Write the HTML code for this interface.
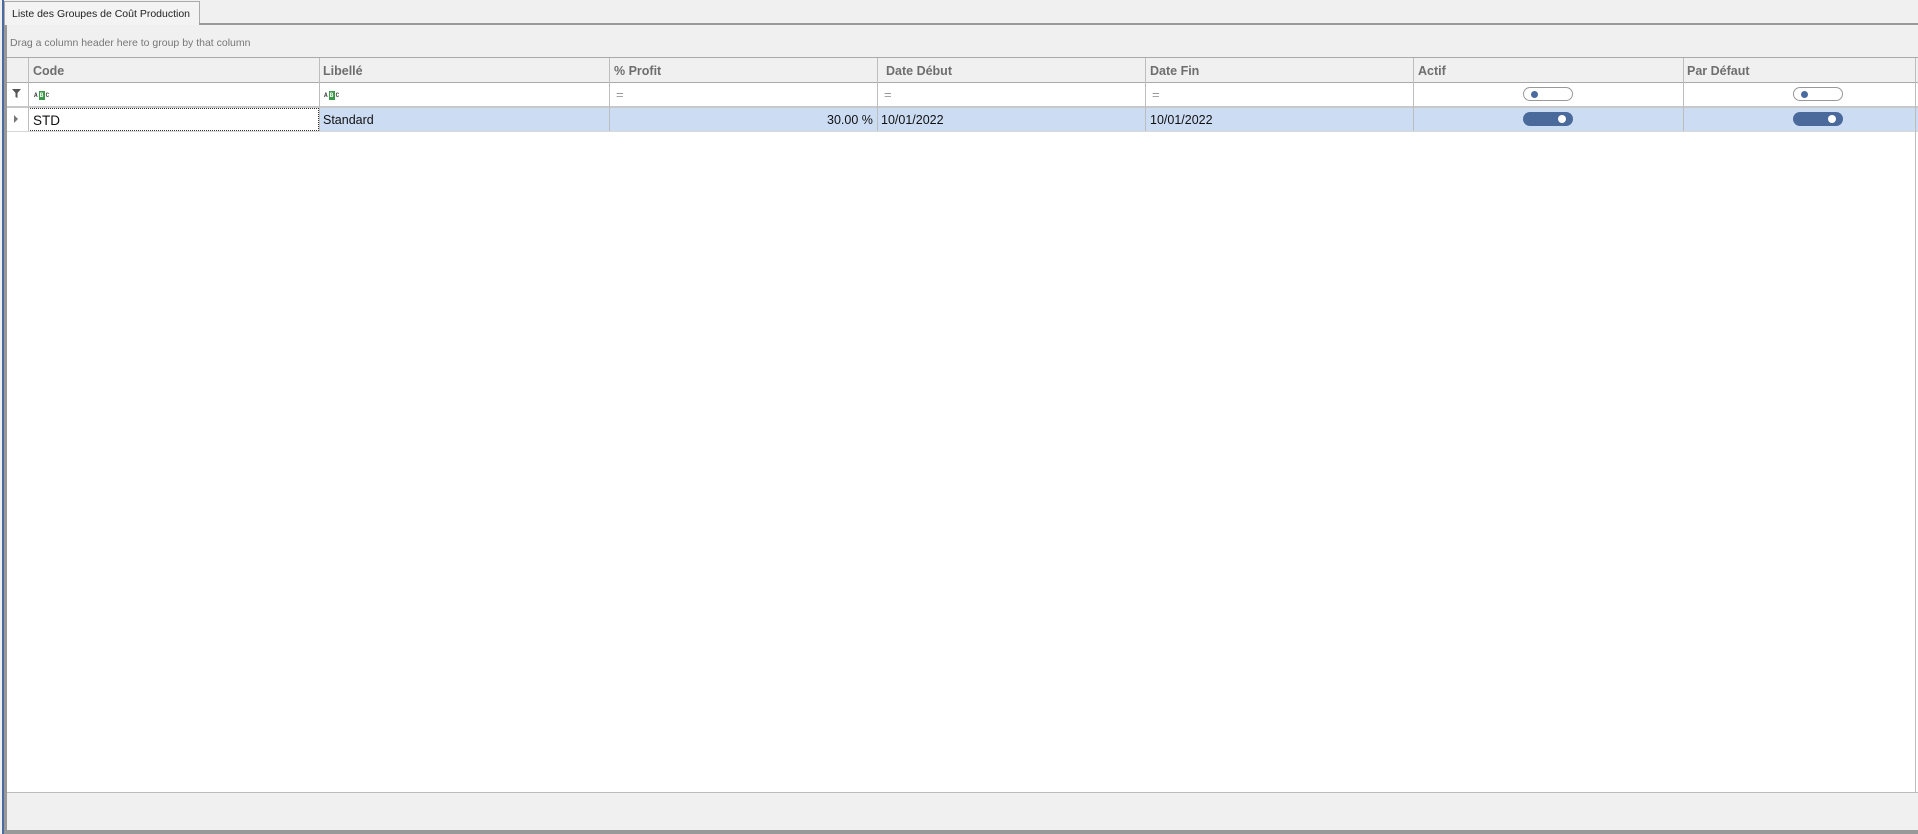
<!DOCTYPE html>
<html><head><meta charset="utf-8"><style>
*{margin:0;padding:0;box-sizing:border-box}
body{width:1918px;height:834px;background:#f0f0f0;font-family:"Liberation Sans",sans-serif;position:relative;overflow:hidden}
.a{position:absolute}
.hd{color:#6e6e6e;font-weight:600;font-size:12.5px;top:64px}
.cell{font-size:12.5px;color:#111;top:113px}
.vl{position:absolute;width:1px;background:#bdbdbd}
.tg{position:absolute;width:50px;height:14px;border-radius:7px}
.off{background:#fff;border:1px solid #999}
.off::after{content:"";position:absolute;left:7px;top:3px;width:7px;height:7px;border-radius:50%;background:#4a6aa0}
.on{background:#4a6a9c}
.on::after{content:"";position:absolute;right:7px;top:3px;width:8px;height:8px;border-radius:50%;background:#fff}
.abc{position:absolute;top:91px;height:9px;display:flex;align-items:center;gap:1px;font-size:6px;font-family:"Liberation Mono",monospace;color:#444;font-weight:bold;line-height:9px}
.abc i{font-style:normal;display:inline-block;width:6px;height:9px;background:#3a9a4a;color:#fff;text-align:center}
.eq{position:absolute;top:87px;color:#999;font-size:13px}
</style></head><body>
<div class="a" style="left:2px;top:0;width:2px;height:834px;background:#4a6aa0"></div>
<div class="a" style="left:4px;top:24px;width:3px;height:810px;background:#999"></div>
<div class="a" style="left:4px;top:1px;width:196px;height:24px;background:#f3f3f3;border:1px solid #aaa;border-bottom:none;font-size:10.5px;color:#222;padding:6px 0 0 7px">Liste des Groupes de Coût Production</div>
<div class="a" style="left:199px;top:23px;width:1719px;height:2px;background:#999"></div>
<div class="a" style="left:10px;top:37px;font-size:10.5px;color:#777">Drag a column header here to group by that column</div>
<div class="a" style="left:7px;top:57px;width:1911px;height:1px;background:#aaa"></div>
<div class="a" style="left:7px;top:58px;width:1911px;height:25px;background:#f0f0f0;border-bottom:1px solid #aaa"></div>
<div class="a" style="left:7px;top:83px;width:1911px;height:709px;background:#fff"></div>
<div class="a" style="left:7px;top:106px;width:1911px;height:2px;background:#c8c8c8"></div>
<div class="a" style="left:28px;top:108px;width:1890px;height:23px;background:#ccdcf3"></div>
<div class="a" style="left:28px;top:108px;width:291px;height:23px;background:#fff;border:1px dotted #333"></div>
<div class="a" style="left:7px;top:131px;width:1911px;height:1px;background:#d8d8d8"></div>
<div class="vl" style="left:28px;top:58px;height:73px"></div>
<div class="vl" style="left:319px;top:58px;height:73px"></div>
<div class="vl" style="left:609px;top:58px;height:73px"></div>
<div class="vl" style="left:877px;top:58px;height:73px"></div>
<div class="vl" style="left:1145px;top:58px;height:73px"></div>
<div class="vl" style="left:1413px;top:58px;height:73px"></div>
<div class="vl" style="left:1683px;top:58px;height:73px"></div>
<div class="vl" style="left:1915px;top:58px;height:734px"></div>
<div class="a hd" style="left:33px">Code</div>
<div class="a hd" style="left:323px">Libellé</div>
<div class="a hd" style="left:614px">% Profit</div>
<div class="a hd" style="left:886px">Date Début</div>
<div class="a hd" style="left:1150px">Date Fin</div>
<div class="a hd" style="left:1418px">Actif</div>
<div class="a hd" style="left:1687px">Par Défaut</div>
<svg class="a" style="left:12px;top:89px" width="9" height="9"><path d="M0 0H9L5.5 4V9L3.5 8V4Z" fill="#555"/></svg>
<div class="abc" style="left:34px">A<i>B</i>C</div>
<div class="abc" style="left:324px">A<i>B</i>C</div>
<div class="eq" style="left:616px">=</div>
<div class="eq" style="left:884px">=</div>
<div class="eq" style="left:1152px">=</div>
<div class="tg off" style="left:1523px;top:87px"></div>
<div class="tg off" style="left:1793px;top:87px"></div>
<svg class="a" style="left:14px;top:115px" width="5" height="8"><path d="M0 0L4 4L0 8Z" fill="#777"/></svg>
<div class="a cell" style="left:33px;font-size:13.5px">STD</div>
<div class="a cell" style="left:323px">Standard</div>
<div class="a cell" style="left:827px">30.00 %</div>
<div class="a cell" style="left:881px">10/01/2022</div>
<div class="a cell" style="left:1150px">10/01/2022</div>
<div class="tg on" style="left:1523px;top:112px"></div>
<div class="tg on" style="left:1793px;top:112px"></div>
<div class="a" style="left:7px;top:792px;width:1911px;height:1px;background:#bbb"></div>
<div class="a" style="left:4px;top:830px;width:1914px;height:4px;background:#999"></div>
</body></html>
